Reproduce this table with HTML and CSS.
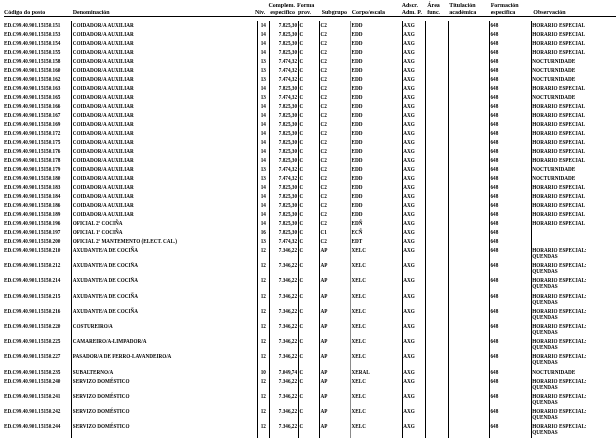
FILE: index.html
```html
<!DOCTYPE html>
<html lang="gl">
<head>
<meta charset="utf-8">
<title>Relación de postos</title>
<link rel="stylesheet" href="styles.css">
</head>
<body>
<table class="rpt">
<colgroup>
<col class="w1"><col class="w2"><col class="w3"><col class="w4"><col class="w5"><col class="w6"><col class="w7"><col class="w8"><col class="w9"><col class="w10"><col class="w11"><col class="w12">
</colgroup>
<thead>
<tr class="hd">
<th class="h-cod">Código do posto</th>
<th class="h-den">Denominación</th>
<th class="h-niv">Nív.</th>
<th class="h-comp">Complem.<br>específico</th>
<th class="h-forma">Forma<br>prov.</th>
<th class="h-sub">Subgrupo</th>
<th class="h-corpo">Corpo/escala</th>
<th class="h-adscr">Adscr.<br>Adm. P.</th>
<th class="h-area">Área<br>func.</th>
<th class="h-tit">Titulación<br>académica</th>
<th class="h-form">Formación<br>específica</th>
<th class="h-obs">Observación</th>
</tr>
<tr class="gap"><td colspan="12"></td></tr>
</thead>
<tbody>
<tr class="r1"><td>ED.C99.40.901.15150.151</td><td>COIDADOR/A AUXILIAR</td><td>14</td><td>7.825,30</td><td>C</td><td>C2</td><td>EDD</td><td>AXG</td><td></td><td></td><td>648</td><td>HORARIO ESPECIAL</td></tr>
<tr class="r1"><td>ED.C99.40.901.15150.153</td><td>COIDADOR/A AUXILIAR</td><td>14</td><td>7.825,30</td><td>C</td><td>C2</td><td>EDD</td><td>AXG</td><td></td><td></td><td>648</td><td>HORARIO ESPECIAL</td></tr>
<tr class="r1"><td>ED.C99.40.901.15150.154</td><td>COIDADOR/A AUXILIAR</td><td>14</td><td>7.825,30</td><td>C</td><td>C2</td><td>EDD</td><td>AXG</td><td></td><td></td><td>648</td><td>HORARIO ESPECIAL</td></tr>
<tr class="r1"><td>ED.C99.40.901.15150.155</td><td>COIDADOR/A AUXILIAR</td><td>14</td><td>7.825,30</td><td>C</td><td>C2</td><td>EDD</td><td>AXG</td><td></td><td></td><td>648</td><td>HORARIO ESPECIAL</td></tr>
<tr class="r1"><td>ED.C99.40.901.15150.158</td><td>COIDADOR/A AUXILIAR</td><td>13</td><td>7.474,32</td><td>C</td><td>C2</td><td>EDD</td><td>AXG</td><td></td><td></td><td>648</td><td>NOCTURNIDADE</td></tr>
<tr class="r1"><td>ED.C99.40.901.15150.160</td><td>COIDADOR/A AUXILIAR</td><td>13</td><td>7.474,32</td><td>C</td><td>C2</td><td>EDD</td><td>AXG</td><td></td><td></td><td>648</td><td>NOCTURNIDADE</td></tr>
<tr class="r1"><td>ED.C99.40.901.15150.162</td><td>COIDADOR/A AUXILIAR</td><td>13</td><td>7.474,32</td><td>C</td><td>C2</td><td>EDD</td><td>AXG</td><td></td><td></td><td>648</td><td>NOCTURNIDADE</td></tr>
<tr class="r1"><td>ED.C99.40.901.15150.163</td><td>COIDADOR/A AUXILIAR</td><td>14</td><td>7.825,30</td><td>C</td><td>C2</td><td>EDD</td><td>AXG</td><td></td><td></td><td>648</td><td>HORARIO ESPECIAL</td></tr>
<tr class="r1"><td>ED.C99.40.901.15150.165</td><td>COIDADOR/A AUXILIAR</td><td>13</td><td>7.474,32</td><td>C</td><td>C2</td><td>EDD</td><td>AXG</td><td></td><td></td><td>648</td><td>NOCTURNIDADE</td></tr>
<tr class="r1"><td>ED.C99.40.901.15150.166</td><td>COIDADOR/A AUXILIAR</td><td>14</td><td>7.825,30</td><td>C</td><td>C2</td><td>EDD</td><td>AXG</td><td></td><td></td><td>648</td><td>HORARIO ESPECIAL</td></tr>
<tr class="r1"><td>ED.C99.40.901.15150.167</td><td>COIDADOR/A AUXILIAR</td><td>14</td><td>7.825,30</td><td>C</td><td>C2</td><td>EDD</td><td>AXG</td><td></td><td></td><td>648</td><td>HORARIO ESPECIAL</td></tr>
<tr class="r1"><td>ED.C99.40.901.15150.169</td><td>COIDADOR/A AUXILIAR</td><td>14</td><td>7.825,30</td><td>C</td><td>C2</td><td>EDD</td><td>AXG</td><td></td><td></td><td>648</td><td>HORARIO ESPECIAL</td></tr>
<tr class="r1"><td>ED.C99.40.901.15150.172</td><td>COIDADOR/A AUXILIAR</td><td>14</td><td>7.825,30</td><td>C</td><td>C2</td><td>EDD</td><td>AXG</td><td></td><td></td><td>648</td><td>HORARIO ESPECIAL</td></tr>
<tr class="r1"><td>ED.C99.40.901.15150.175</td><td>COIDADOR/A AUXILIAR</td><td>14</td><td>7.825,30</td><td>C</td><td>C2</td><td>EDD</td><td>AXG</td><td></td><td></td><td>648</td><td>HORARIO ESPECIAL</td></tr>
<tr class="r1"><td>ED.C99.40.901.15150.176</td><td>COIDADOR/A AUXILIAR</td><td>14</td><td>7.825,30</td><td>C</td><td>C2</td><td>EDD</td><td>AXG</td><td></td><td></td><td>648</td><td>HORARIO ESPECIAL</td></tr>
<tr class="r1"><td>ED.C99.40.901.15150.178</td><td>COIDADOR/A AUXILIAR</td><td>14</td><td>7.825,30</td><td>C</td><td>C2</td><td>EDD</td><td>AXG</td><td></td><td></td><td>648</td><td>HORARIO ESPECIAL</td></tr>
<tr class="r1"><td>ED.C99.40.901.15150.179</td><td>COIDADOR/A AUXILIAR</td><td>13</td><td>7.474,32</td><td>C</td><td>C2</td><td>EDD</td><td>AXG</td><td></td><td></td><td>648</td><td>NOCTURNIDADE</td></tr>
<tr class="r1"><td>ED.C99.40.901.15150.180</td><td>COIDADOR/A AUXILIAR</td><td>13</td><td>7.474,32</td><td>C</td><td>C2</td><td>EDD</td><td>AXG</td><td></td><td></td><td>648</td><td>NOCTURNIDADE</td></tr>
<tr class="r1"><td>ED.C99.40.901.15150.183</td><td>COIDADOR/A AUXILIAR</td><td>14</td><td>7.825,30</td><td>C</td><td>C2</td><td>EDD</td><td>AXG</td><td></td><td></td><td>648</td><td>HORARIO ESPECIAL</td></tr>
<tr class="r1"><td>ED.C99.40.901.15150.184</td><td>COIDADOR/A AUXILIAR</td><td>14</td><td>7.825,30</td><td>C</td><td>C2</td><td>EDD</td><td>AXG</td><td></td><td></td><td>648</td><td>HORARIO ESPECIAL</td></tr>
<tr class="r1"><td>ED.C99.40.901.15150.186</td><td>COIDADOR/A AUXILIAR</td><td>14</td><td>7.825,30</td><td>C</td><td>C2</td><td>EDD</td><td>AXG</td><td></td><td></td><td>648</td><td>HORARIO ESPECIAL</td></tr>
<tr class="r1"><td>ED.C99.40.901.15150.189</td><td>COIDADOR/A AUXILIAR</td><td>14</td><td>7.825,30</td><td>C</td><td>C2</td><td>EDD</td><td>AXG</td><td></td><td></td><td>648</td><td>HORARIO ESPECIAL</td></tr>
<tr class="r1"><td>ED.C99.40.901.15150.196</td><td>OFICIAL 2ª COCIÑA</td><td>14</td><td>7.825,30</td><td>C</td><td>C2</td><td>EDÑ</td><td>AXG</td><td></td><td></td><td>648</td><td>HORARIO ESPECIAL</td></tr>
<tr class="r1"><td>ED.C99.40.901.15150.197</td><td>OFICIAL 1ª COCIÑA</td><td>16</td><td>7.825,30</td><td>C</td><td>C1</td><td>ECÑ</td><td>AXG</td><td></td><td></td><td>648</td><td></td></tr>
<tr class="r1"><td>ED.C99.40.901.15150.200</td><td>OFICIAL 2ª MANTEMENTO (ELECT. CAL.)</td><td>13</td><td>7.474,32</td><td>C</td><td>C2</td><td>EDT</td><td>AXG</td><td></td><td></td><td>648</td><td></td></tr>
<tr class="r2"><td>ED.C99.40.901.15150.210</td><td>AXUDANTE/A DE COCIÑA</td><td>12</td><td>7.346,22</td><td>C</td><td>AP</td><td>XELC</td><td>AXG</td><td></td><td></td><td>648</td><td>HORARIO ESPECIAL:<br>QUENDAS</td></tr>
<tr class="r2"><td>ED.C99.40.901.15150.212</td><td>AXUDANTE/A DE COCIÑA</td><td>12</td><td>7.346,22</td><td>C</td><td>AP</td><td>XELC</td><td>AXG</td><td></td><td></td><td>648</td><td>HORARIO ESPECIAL:<br>QUENDAS</td></tr>
<tr class="r2"><td>ED.C99.40.901.15150.214</td><td>AXUDANTE/A DE COCIÑA</td><td>12</td><td>7.346,22</td><td>C</td><td>AP</td><td>XELC</td><td>AXG</td><td></td><td></td><td>648</td><td>HORARIO ESPECIAL:<br>QUENDAS</td></tr>
<tr class="r2"><td>ED.C99.40.901.15150.215</td><td>AXUDANTE/A DE COCIÑA</td><td>12</td><td>7.346,22</td><td>C</td><td>AP</td><td>XELC</td><td>AXG</td><td></td><td></td><td>648</td><td>HORARIO ESPECIAL:<br>QUENDAS</td></tr>
<tr class="r2"><td>ED.C99.40.901.15150.216</td><td>AXUDANTE/A DE COCIÑA</td><td>12</td><td>7.346,22</td><td>C</td><td>AP</td><td>XELC</td><td>AXG</td><td></td><td></td><td>648</td><td>HORARIO ESPECIAL:<br>QUENDAS</td></tr>
<tr class="r2"><td>ED.C99.40.901.15150.220</td><td>COSTUREIRO/A</td><td>12</td><td>7.346,22</td><td>C</td><td>AP</td><td>XELC</td><td>AXG</td><td></td><td></td><td>648</td><td>HORARIO ESPECIAL:<br>QUENDAS</td></tr>
<tr class="r2"><td>ED.C99.40.901.15150.225</td><td>CAMAREIRO/A-LIMPADOR/A</td><td>12</td><td>7.346,22</td><td>C</td><td>AP</td><td>XELC</td><td>AXG</td><td></td><td></td><td>648</td><td>HORARIO ESPECIAL:<br>QUENDAS</td></tr>
<tr class="r2"><td>ED.C99.40.901.15150.227</td><td>PASADOR/A DE FERRO-LAVANDEIRO/A</td><td>12</td><td>7.346,22</td><td>C</td><td>AP</td><td>XELC</td><td>AXG</td><td></td><td></td><td>648</td><td>HORARIO ESPECIAL:<br>QUENDAS</td></tr>
<tr class="r1"><td>ED.C99.40.901.15150.235</td><td>SUBALTERNO/A</td><td>10</td><td>7.049,74</td><td>C</td><td>AP</td><td>XERAL</td><td>AXG</td><td></td><td></td><td>648</td><td>NOCTURNIDADE</td></tr>
<tr class="r2"><td>ED.C99.40.901.15150.240</td><td>SERVIZO DOMÉSTICO</td><td>12</td><td>7.346,22</td><td>C</td><td>AP</td><td>XELC</td><td>AXG</td><td></td><td></td><td>648</td><td>HORARIO ESPECIAL:<br>QUENDAS</td></tr>
<tr class="r2"><td>ED.C99.40.901.15150.241</td><td>SERVIZO DOMÉSTICO</td><td>12</td><td>7.346,22</td><td>C</td><td>AP</td><td>XELC</td><td>AXG</td><td></td><td></td><td>648</td><td>HORARIO ESPECIAL:<br>QUENDAS</td></tr>
<tr class="r2"><td>ED.C99.40.901.15150.242</td><td>SERVIZO DOMÉSTICO</td><td>12</td><td>7.346,22</td><td>C</td><td>AP</td><td>XELC</td><td>AXG</td><td></td><td></td><td>648</td><td>HORARIO ESPECIAL:<br>QUENDAS</td></tr>
<tr class="r2"><td>ED.C99.40.901.15150.244</td><td>SERVIZO DOMÉSTICO</td><td>12</td><td>7.346,22</td><td>C</td><td>AP</td><td>XELC</td><td>AXG</td><td></td><td></td><td>648</td><td>HORARIO ESPECIAL:<br>QUENDAS</td></tr>
</tbody>
</table>
</body>
</html>
```
FILE: styles.css
```css
html, body {
  margin: 0;
  padding: 0;
  background: #fff;
}
body {
  font-family: "Liberation Serif", "Times New Roman", serif;
  color: #000;
  overflow: hidden;
}
.rpt {
  margin-left: 4px;
  width: 612px;
  table-layout: fixed;
  border-collapse: separate;
  border-spacing: 0;
  will-change: transform;
}
.w1 { width: 67px; }
.w2 { width: 186px; }
.w3 { width: 11.5px; }
.w4 { width: 29.5px; }
.w5 { width: 21px; }
.w6 { width: 31px; }
.w7 { width: 51.7px; }
.w8 { width: 23.3px; }
.w9 { width: 23.3px; }
.w10 { width: 41px; }
.w11 { width: 41.4px; }
.w12 { width: 85.3px; }

.hd th {
  font-size: 6px;
  font-weight: bold;
  line-height: 7.4px;
  text-align: left;
  vertical-align: bottom;
  white-space: nowrap;
  padding: 1.6px 0 0 1.5px;
  border-bottom: 1px solid #000;
}
.hd .h-cod { padding-left: 0; }
.hd .h-den { padding-left: 1.7px; }
.hd .h-niv { padding-left: 0; text-indent: -2px; }
.hd .h-comp { text-align: right; padding-right: 3px; padding-left: 0; }
.hd .h-forma { padding-left: 0; text-indent: -1px; }
.hd .h-sub { padding-left: 2.7px; }
.hd .h-corpo { padding-left: 1.7px; }
.hd .h-adscr { padding-left: 0; }
.hd .h-area { padding-left: 2.3px; }
.hd .h-tit { padding-left: 1px; }
.hd .h-form { padding-left: 1.4px; }
.hd .h-obs { padding-left: 2.6px; }

.gap td {
  height: 4px;
  padding: 0;
}

tbody td {
  font-size: 5.2px;
  font-weight: bold;
  line-height: 6px;
  vertical-align: top;
  white-space: nowrap;
  overflow: hidden;
  padding: 0.6px 0 0 0.6px;
}
tbody td + td {
  border-left: 1px solid #000;
}
tbody td:nth-child(1) { padding-left: 0; }
tbody td:nth-child(2) { padding-left: 0.8px; }
tbody td:nth-child(3) { text-align: center; padding-left: 0; }
tbody td:nth-child(4) { text-align: right; padding-right: 1px; padding-left: 0; }
tbody td:nth-child(7) { border-left: 1.5px solid #8a8a8a; }
tbody td:nth-child(11) { padding-left: 0.2px; }
tbody td:nth-child(12) { border-left: 1.3px solid #000; }

.r1 { height: 9px; }
.r2 { height: 15.2px; }
```
